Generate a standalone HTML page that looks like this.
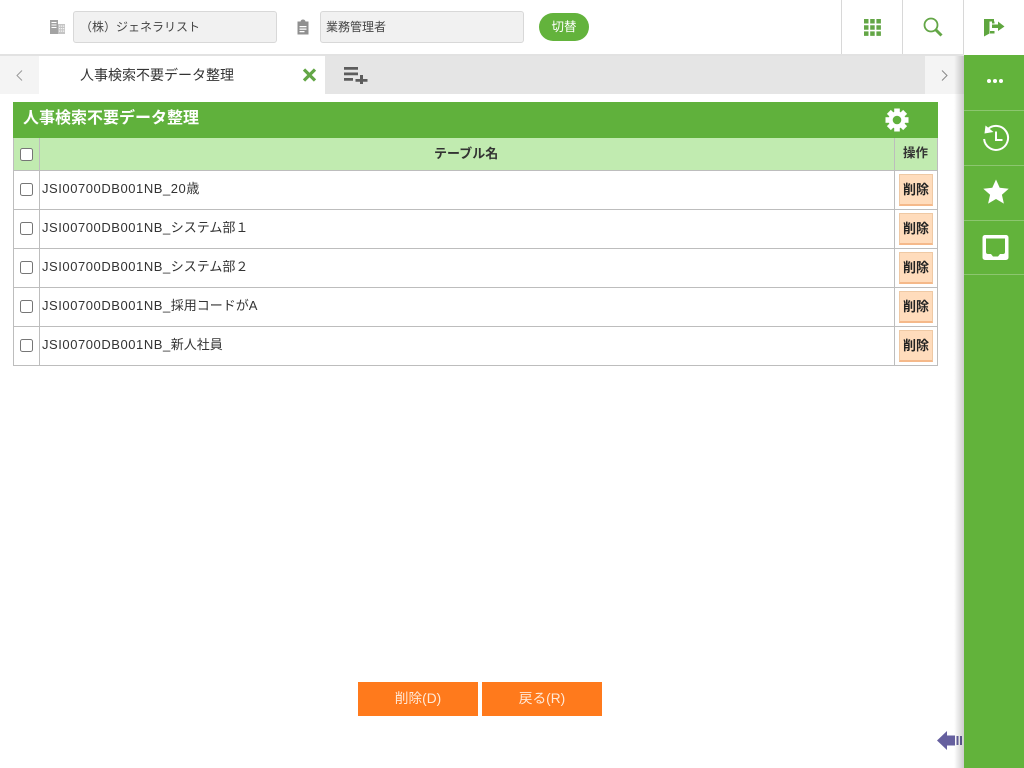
<!DOCTYPE html>
<html lang="ja"><head><meta charset="utf-8"><style>
*{box-sizing:border-box}
html,body{margin:0;padding:0;width:1024px;height:768px;overflow:hidden;background:#fff;font-family:"Liberation Sans","Noto Sans CJK JP",sans-serif;color:#333}
.a{position:absolute}
.t{white-space:nowrap;line-height:1}
.inp{background:#f1f1f1;border:1px solid #d8d8d8;border-radius:3px;height:32px;top:11px;font-size:12px;line-height:31px;white-space:nowrap}
.vl{width:1px;background:#d8d8d8;top:0;height:54px}
.h{height:1px;background:#bdbdbd;left:13px;width:925px}
.v{width:1px;background:#bdbdbd}
.cb{width:13px;height:13px;left:20px;border:1px solid #767676;border-radius:2.5px;background:#fff}
.btn{left:899px;width:34px;height:32px;background:#ffdcbc;border:1px solid #efc9a4;border-bottom:2px solid #f5b98a;font-size:13px;font-weight:bold;text-align:center;line-height:29px;color:#222}
.name{left:42px;font-size:13px;color:#333}
.name span{letter-spacing:.55px}
.sd{left:964px;width:60px;height:1px;background:#8cc66f}
.ob{top:682px;width:120px;height:34px;background:#ff7a1c;color:#ffe9d8;font-size:13.700px;text-align:center;line-height:33px}
</style></head><body>
<div class="a" style="left:0;top:0;width:1024px;height:54px;background:#fff"></div>
<div class="a" style="left:0;top:54px;width:964px;height:2px;background:#e2e2e2"></div>

<svg class="a" style="left:49px;top:19px" width="17" height="16" viewBox="0 0 17 16"><path fill="#a3a3a3" d="M1 1h8v14H1z"/><path fill="#fff" d="M2.500 3h5v1h-5zM2.500 5.500h5v1h-5zM2.500 8h5v1h-5z"/><path fill="#c4c4c4" d="M9 5h7v10H9z"/><path fill="#f4f4f4" d="M10 6.500h1.300v1.300H10zM12 6.500h1.300v1.300H12zM14 6.500h1.300v1.300H14zM10 9h1.300v1.300H10zM12 9h1.300v1.300H12zM14 9h1.300v1.300H14zM10 11.500h1.300v1.300H10zM12 11.500h1.300v1.300H12zM14 11.500h1.300v1.300H14z"/></svg>
<div class="a inp" style="left:73px;width:204px;padding-left:6px;color:#444">（株）ジェネラリスト</div>

<svg class="a" style="left:296px;top:19px" width="14" height="16" viewBox="0 0 14 16"><path fill="#8f8f8f" d="M1.500 2.500h3c.3-1.300 1.200-2 2.500-2s2.200.7 2.500 2h3v13h-11z"/><path fill="#fff" d="M3.500 7h7v1.200h-7zM3.500 9.500h7v1.200h-7zM3.500 12h5v1.200h-5z"/></svg>
<div class="a inp" style="left:320px;width:204px;padding-left:5px;color:#444">業務管理者</div>

<div class="a" style="left:539px;top:13px;width:50px;height:28px;border-radius:14px;background:#63b33c;color:#fff;font-size:12.500px;text-align:center;line-height:28px">切替</div>

<div class="a vl" style="left:841px"></div>
<div class="a vl" style="left:902px"></div>
<div class="a vl" style="left:963px"></div>
<svg class="a" style="left:864px;top:19px" width="17" height="17" viewBox="0 0 17 17" fill="#63a646"><path d="M0 0h4.500v4.500H0zM6.200 0h4.500v4.500H6.200zM12.400 0h4.500v4.500h-4.500zM0 6.200h4.500v4.500H0zM6.200 6.200h4.500v4.500H6.200zM12.400 6.200h4.500v4.500h-4.500zM0 12.400h4.500v4.500H0zM6.200 12.400h4.500v4.500H6.200zM12.400 12.400h4.500v4.500h-4.500z"/></svg>
<svg class="a" style="left:923px;top:17px" width="20" height="20" viewBox="0 0 20 20"><circle cx="8" cy="8" r="6.500" fill="none" stroke="#63a646" stroke-width="1.800"/><path d="M12.500 12.500l6 6" stroke="#63a646" stroke-width="3" fill="none"/></svg>
<svg class="a" style="left:983px;top:18px" width="22" height="19" viewBox="0 0 22 19"><path fill="#5fa63f" d="M1 1h10v2.500H6.500v12L1 18.500z"/><path fill="#5fa63f" d="M7 13h4.500v2.500H7zM9 3.500h2.500v2H9z"/><path fill="#5fa63f" d="M9 6.500h6V3.500L21.500 8.500 15 13v-3H9z"/></svg>

<!-- tabs -->
<div class="a" style="left:0;top:56px;width:39px;height:38px;background:#f4f4f4"></div>
<div class="a" style="left:325px;top:56px;width:600px;height:38px;background:#e5e5e5"></div>
<div class="a" style="left:925px;top:56px;width:39px;height:38px;background:#f4f4f4"></div>
<svg class="a" style="left:15px;top:69px" width="9" height="13" viewBox="0 0 9 13"><path d="M7 1.500L2 6.500l5 5" fill="none" stroke="#999" stroke-width="1"/></svg>
<svg class="a" style="left:940px;top:69px" width="9" height="13" viewBox="0 0 9 13"><path d="M2 1.500l5 5-5 5" fill="none" stroke="#888" stroke-width="1"/></svg>
<div class="a t" style="left:80px;top:68px;font-size:14px;color:#333">人事検索不要データ整理</div>
<svg class="a" style="left:302px;top:68px" width="15" height="14" viewBox="0 0 15 14"><path d="M2 1.500l11 11M13 1.500l-11 11" stroke="#63a646" stroke-width="3.200" fill="none"/></svg>
<svg class="a" style="left:344px;top:66px" width="24" height="18" viewBox="0 0 24 18" fill="#5c5c5c"><path d="M0 1h14v2.800H0zM0 6.500h14v2.800H0zM0 12h9v2.800H0zM16 9h3v4h4.500v2.800H19V18h-3v-2.200h-4.500V13H16z"/></svg>

<!-- panel -->
<div class="a" style="left:13px;top:102px;width:925px;height:36px;background:#60b13c"></div>
<div class="a t" style="left:23px;top:111px;font-size:16px;font-weight:bold;color:#fff">人事検索不要データ整理</div>
<svg class="a" style="left:885px;top:108px" width="24" height="24" viewBox="-12 -12 24 24"><g fill="#fff"><circle r="8.500"/><path d="M-2.800-11.500h5.600v5h-5.600z"/><path d="M-2.800-11.500h5.600v5h-5.600z" transform="rotate(45)"/><path d="M-2.800-11.500h5.600v5h-5.600z" transform="rotate(90)"/><path d="M-2.800-11.500h5.600v5h-5.600z" transform="rotate(135)"/><path d="M-2.800-11.500h5.600v5h-5.600z" transform="rotate(180)"/><path d="M-2.800-11.500h5.600v5h-5.600z" transform="rotate(225)"/><path d="M-2.800-11.500h5.600v5h-5.600z" transform="rotate(270)"/><path d="M-2.800-11.500h5.600v5h-5.600z" transform="rotate(315)"/></g><circle r="4.300" fill="#60b13c"/></svg>

<div class="a" style="left:13px;top:138px;width:925px;height:32px;background:#c1ebb0"></div>
<div class="a t" style="left:434px;top:147px;font-size:13px;font-weight:bold;color:#333">テーブル名</div>
<div class="a t" style="left:903px;top:147px;font-size:12.500px;font-weight:bold;color:#333">操作</div>

<div class="a h" style="top:170px"></div>
<div class="a h" style="top:209px"></div>
<div class="a h" style="top:248px"></div>
<div class="a h" style="top:287px"></div>
<div class="a h" style="top:326px"></div>
<div class="a h" style="top:365px"></div>
<div class="a v" style="left:13px;top:138px;height:228px"></div>
<div class="a v" style="left:39px;top:138px;height:228px"></div>
<div class="a v" style="left:894px;top:138px;height:228px"></div>
<div class="a v" style="left:937px;top:138px;height:228px"></div>

<div class="a cb" style="top:148px"></div>
<div class="a cb" style="top:183px"></div>
<div class="a cb" style="top:222px"></div>
<div class="a cb" style="top:261px"></div>
<div class="a cb" style="top:300px"></div>
<div class="a cb" style="top:339px"></div>

<div class="a t name" style="top:182px"><span>JSI00700DB001NB_20</span>歳</div>
<div class="a t name" style="top:221px"><span>JSI00700DB001NB_</span>システム部１</div>
<div class="a t name" style="top:260px"><span>JSI00700DB001NB_</span>システム部２</div>
<div class="a t name" style="top:299px"><span>JSI00700DB001NB_</span>採用コードがA</div>
<div class="a t name" style="top:338px"><span>JSI00700DB001NB_</span>新人社員</div>

<div class="a btn" style="top:174px">削除</div>
<div class="a btn" style="top:213px">削除</div>
<div class="a btn" style="top:252px">削除</div>
<div class="a btn" style="top:291px">削除</div>
<div class="a btn" style="top:330px">削除</div>

<div class="a ob" style="left:358px">削除(D)</div>
<div class="a ob" style="left:482px">戻る(R)</div>

<svg class="a" style="left:937px;top:730px" width="27" height="21" viewBox="0 0 27 21" fill="#66609f"><path d="M0 10.500L10 1v4.500h8v10h-8V20z"/><path d="M19.500 6h2v9h-2zM23 6h2v9h-2z"/></svg>

<!-- sidebar -->
<div class="a" style="left:954px;top:56px;width:10px;height:712px;background:linear-gradient(to right,rgba(0,0,0,0),rgba(0,0,0,.2))"></div>
<div class="a" style="left:964px;top:55px;width:60px;height:713px;background:#62b33b"></div>
<div class="a sd" style="top:110px"></div>
<div class="a sd" style="top:165px"></div>
<div class="a sd" style="top:220px"></div>
<div class="a sd" style="top:274px"></div>
<svg class="a" style="left:986px;top:78px" width="18" height="6" viewBox="0 0 18 6" fill="#fff"><circle cx="3" cy="3" r="2"/><circle cx="9" cy="3" r="2"/><circle cx="15" cy="3" r="2"/></svg>
<svg class="a" style="left:981px;top:123px" width="30" height="30" viewBox="0 0 30 30"><path d="M6.500 6.500A12 12 0 1 1 3.100 16" fill="none" stroke="#fff" stroke-width="2"/><path d="M4.500 2.500l8 6.500-9 1.500z" fill="#fff"/><path d="M15 8.500v8.500h6.500" fill="none" stroke="#fff" stroke-width="2"/></svg>
<svg class="a" style="left:983px;top:179px" width="26" height="26" viewBox="0 0 26 26"><path fill="#fff" d="M13 .5l3.700 8.300 9 .9-6.800 6 2 8.900L13 20l-7.900 4.600 2-8.900-6.800-6 9-.9z"/></svg>
<svg class="a" style="left:982px;top:234px" width="27" height="27" viewBox="0 0 27 27"><path fill="#fff" fill-rule="evenodd" d="M3 1h21a2.500 2.500 0 0 1 2.500 2.500v20A2.500 2.500 0 0 1 24 26H3A2.500 2.500 0 0 1 .5 23.500v-20A2.500 2.500 0 0 1 3 1zM4 4.500V18a2 2 0 0 0 2 2h3l2 2.500h5l2-2.500h3a2 2 0 0 0 2-2V4.500z"/></svg>
</body></html>
